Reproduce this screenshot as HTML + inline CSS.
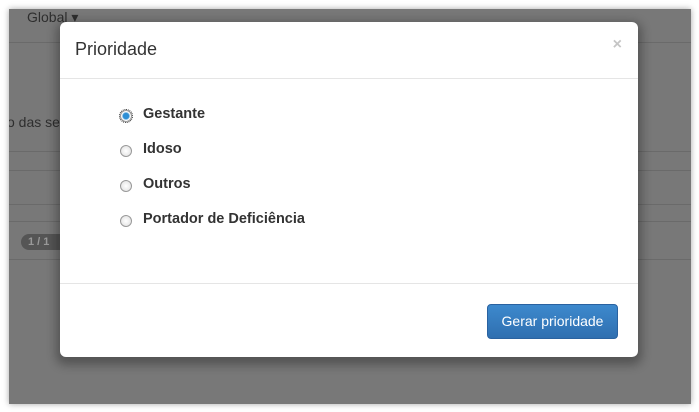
<!DOCTYPE html>
<html><head><style>
body{margin:0;width:699px;height:412px;background:#fff;position:relative;overflow:hidden;font-family:"Liberation Sans",sans-serif}
.bd{position:absolute;left:9px;top:9px;width:682px;height:395px;background:#787878;box-shadow:0 0 6px rgba(0,0,0,.35);overflow:hidden}
.bd .l{position:absolute;left:0;right:0;height:1px;background:#6a6a6a}
.bd .t{position:absolute;color:#2e2e2e;font-size:14px}
.m{position:absolute;left:60px;top:22px;width:578px;height:335px;background:#fff;border-radius:6px;box-shadow:0 4px 10px 4px rgba(0,0,0,.3)}
.h{height:56px;border-bottom:1px solid #e5e5e5;position:relative}
.h span{position:absolute;left:15px;top:17px;font-size:18px;color:#333}
.x{position:absolute;right:16px;top:14px;font-size:16px;font-weight:bold;color:#c5c5c5}
.r{position:absolute;left:83px;font-size:14.5px;font-weight:bold;color:#333}
.r i{position:absolute;left:-23px;top:4px;width:10px;height:10px;border:1px solid #999;border-radius:50%;background:radial-gradient(#fff,#ddd)}
.f{position:absolute;left:0;right:0;top:261px;border-top:1px solid #e5e5e5}
.b{position:absolute;left:427px;top:282px;width:129px;height:33px;border:1px solid #2a62a0;border-radius:4px;background:linear-gradient(#3d89cd,#2f6fb0);color:#fff;font-size:14px;text-align:center;line-height:33px}
</style></head><body>
<div class="bd">
<div class="l" style="top:33px"></div>
<div class="l" style="top:142px"></div>
<div class="l" style="top:161px"></div>
<div class="l" style="top:195px"></div>
<div class="l" style="top:212px"></div>
<div class="l" style="top:250px"></div>
<div class="t" style="left:18px;top:0px">Global ▾</div>
<div class="t" style="left:-2px;top:105px">o das se</div>
<div style="position:absolute;left:12px;top:225px;width:50px;height:16px;border-radius:8px;background:#555;color:#999;font-size:11px;font-weight:bold;line-height:16px;padding-left:7px">1 / 1</div>
</div>
<div class="m">
<div class="h"><span>Prioridade</span><div class="x">×</div></div>
<div class="r" style="top:84px"><i style="background:radial-gradient(#2d8fd5 40%,#fff 60%);outline:1px dotted #333"></i>Gestante</div>
<div class="r" style="top:119px"><i></i>Idoso</div>
<div class="r" style="top:154px"><i></i>Outros</div>
<div class="r" style="top:189px"><i></i>Portador de Deficiência</div>
<div class="f"></div>
<div class="b">Gerar prioridade</div>
</div>
</body></html>
